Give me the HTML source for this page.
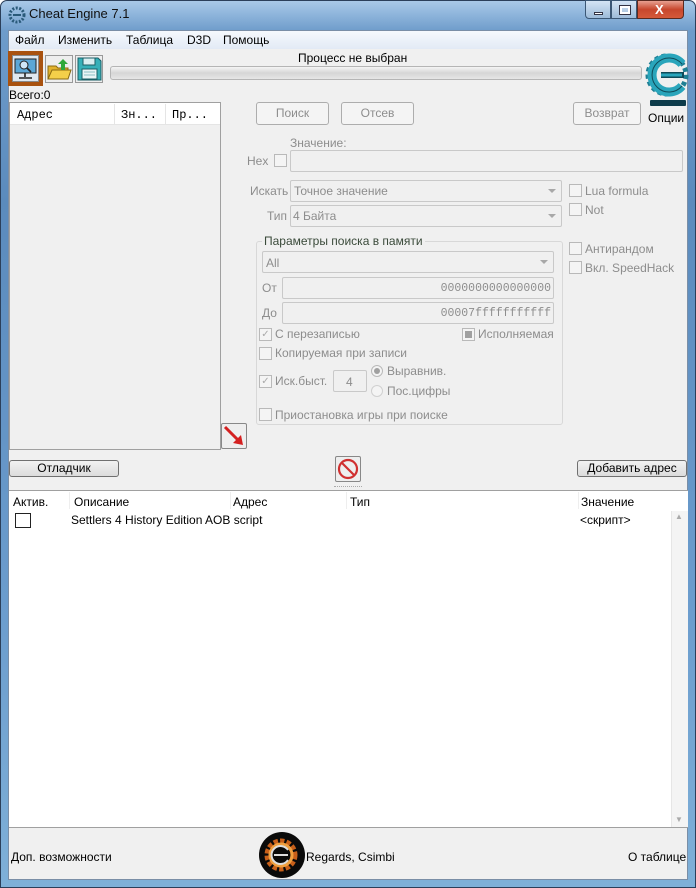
<!DOCTYPE html>
<html><head><meta charset="utf-8"><style>
*{box-sizing:border-box;margin:0;padding:0}
body{width:696px;height:888px;overflow:hidden;background:#fff;font-family:"Liberation Sans","DejaVu Sans",sans-serif;font-size:12px;color:#000;position:relative}
.a{position:absolute}
.frame{left:0;top:0;width:696px;height:888px;border-radius:7px 7px 0 0;background:linear-gradient(180deg,#a9c9e8 0,#6e9ccb 30px,#5b8bbd 200px,#6b9ccd 600px,#7fb0d8 888px);border:1px solid #2b3f5a}
.content{left:8px;top:30px;width:680px;height:850px;background:#f0f0f0;border:1px solid #7a8ea6}
.t{position:absolute;white-space:nowrap}
.g{color:#8d8d8d}
.btn{position:absolute;border:1px solid #adadad;border-radius:3px;background:#f4f4f4;color:#8d8d8d;text-align:center;line-height:20px}
.btn2{position:absolute;border:1px solid #707070;border-radius:3px;background:linear-gradient(#f2f2f2,#dcdcdc);text-align:center;line-height:15px}
.inp{position:absolute;border:1px solid #c9c9c9;border-radius:2px;background:#f0f0f0}
.cb{position:absolute;width:13px;height:13px;border:1px solid #b9b9b9;background:#f4f4f4}
.dd{position:absolute;right:5px;top:8px;width:0;height:0;border-left:4px solid transparent;border-right:4px solid transparent;border-top:4px solid #a8a8a8}
</style></head><body>
<div class="a frame"></div>
<svg class="a" style="left:8px;top:6px" width="18" height="18" viewBox="0 0 18 18"><circle cx="9" cy="9" r="7" fill="none" stroke="#2a5a7a" stroke-width="3" stroke-dasharray="2 1.5"/><path d="M5 9h8" stroke="#2a5a7a" stroke-width="2"/></svg>
<div class="t" style="left:29px;top:6px;font-size:13px;color:#111">Cheat Engine 7.1</div>
<div class="a" style="left:585px;top:0;width:26px;height:19px;border:1px solid #3b5775;border-radius:0 0 0 4px;background:linear-gradient(#d4e4f4,#9dbbd9)"><div class="a" style="left:8px;top:11px;width:9px;height:3px;background:#fff;border:1px solid #334"></div></div>
<div class="a" style="left:611px;top:0;width:26px;height:19px;border:1px solid #3b5775;background:linear-gradient(#d4e4f4,#9dbbd9)"><div class="a" style="left:8px;top:5px;width:10px;height:8px;border:2px solid #fff;outline:1px solid #334"></div></div>
<div class="a" style="left:637px;top:0;width:47px;height:19px;border:1px solid #5a2a20;border-radius:0 0 4px 0;background:linear-gradient(#e8a090,#c7472d 50%,#d55a3a)"><div class="t" style="left:17px;top:1px;color:#fff;font-weight:bold;font-size:13px">X</div></div>
<div class="a content"></div>
<div class="a" style="left:9px;top:31px;width:678px;height:18px;background:linear-gradient(#f6f9fd,#e2eaf5)"></div>
<div class="t" style="left:15px;top:33px;font-size:12px">Файл</div>
<div class="t" style="left:58px;top:33px">Изменить</div>
<div class="t" style="left:126px;top:33px">Таблица</div>
<div class="t" style="left:187px;top:33px">D3D</div>
<div class="t" style="left:223px;top:33px">Помощь</div>
<div class="a" style="left:8px;top:51px;width:35px;height:35px;background:#a9520f"></div>
<div class="a" style="left:12px;top:55px;width:27px;height:27px;background:#dfe8f0;border:1px solid #888"></div>
<svg class="a" style="left:13px;top:57px" width="25" height="24" viewBox="0 0 25 24"><rect x="2" y="2" width="21" height="14" fill="#5ba7d6" stroke="#222"/><circle cx="11" cy="8" r="4" fill="#cfe7f7" stroke="#222"/><path d="M14 11l4 4M12 16v4M6 21h13" stroke="#222" stroke-width="1.6"/></svg>
<div class="a" style="left:45px;top:55px;width:28px;height:28px;border:1px solid #999;background:#eee"></div>
<svg class="a" style="left:46px;top:56px" width="26" height="26" viewBox="0 0 26 26"><path d="M2 10h8l2 2h10v11H2z" fill="#e2b22c" stroke="#8a6a10"/><path d="M2 23l4-9h19l-3 9z" fill="#f4cf4a" stroke="#8a6a10"/><path d="M17 3l-5 5h3v6h4V8h3z" fill="#2fa83a"/></svg>
<div class="a" style="left:75px;top:55px;width:28px;height:28px;border:1px solid #999;background:#eee"></div>
<svg class="a" style="left:76px;top:56px" width="26" height="26" viewBox="0 0 26 26"><path d="M2 2h20l3 3v19H2z" fill="#36b0b8" stroke="#1b5f66"/><rect x="7" y="2" width="12" height="7" fill="#d9eef0" stroke="#1b5f66"/><rect x="6" y="13" width="15" height="10" fill="#e9f5f6" stroke="#1b5f66"/><path d="M8 16h11M8 19h11" stroke="#8abfc4"/></svg>
<div class="t" style="left:298px;top:51px">Процесс не выбран</div>
<div class="a" style="left:110px;top:66px;width:532px;height:14px;border:1px solid #b5b5b5;border-radius:3px;background:linear-gradient(#f5f5f5,#d6d6d6 50%,#e6e6e6)"></div>
<svg class="a" style="left:644px;top:50px" width="46" height="58" viewBox="0 0 46 58"><circle cx="23" cy="25" r="19" fill="none" stroke="#1f7f94" stroke-width="5" stroke-dasharray="4 3"/><path d="M38 14A17 17 0 1 0 38 36" fill="none" stroke="#2aa5bb" stroke-width="9"/><path d="M38 14A17 17 0 1 0 38 36" fill="none" stroke="#0f4a58" stroke-width="1" transform="translate(0 0)"/><path d="M17 25h23" stroke="#0f4a58" stroke-width="6"/><path d="M17 25h21" stroke="#2aa5bb" stroke-width="3"/><rect x="6" y="50" width="36" height="6" rx="1" fill="#0d3b4a"/></svg>
<div class="t" style="left:648px;top:111px">Опции</div>
<div class="t" style="left:9px;top:88px">Всего:0</div>
<div class="a" style="left:9px;top:102px;width:212px;height:348px;border:1px solid #a0a0a0;background:#f0f0f0"></div>
<div class="a" style="left:10px;top:103px;width:210px;height:22px;background:#fff;border-bottom:1px solid #e5e5e5"></div>
<div class="a" style="left:114px;top:104px;width:1px;height:20px;background:#e5e5e5"></div>
<div class="a" style="left:165px;top:104px;width:1px;height:20px;background:#e5e5e5"></div>
<div class="t" style="left:17px;top:108px;font-family:'Liberation Mono',monospace;font-size:12px">Адрес</div>
<div class="t" style="left:121px;top:108px;font-family:'Liberation Mono',monospace;font-size:12px">Зн...</div>
<div class="t" style="left:172px;top:108px;font-family:'Liberation Mono',monospace;font-size:12px">Пр...</div>
<div class="btn" style="left:256px;top:102px;width:73px;height:23px">Поиск</div>
<div class="btn" style="left:341px;top:102px;width:73px;height:23px">Отсев</div>
<div class="btn" style="left:573px;top:102px;width:68px;height:23px">Возврат</div>
<div class="t g" style="left:290px;top:136px">Значение:</div>
<div class="t g" style="left:247px;top:154px">Hex</div>
<div class="cb" style="left:274px;top:154px"></div>
<div class="inp" style="left:290px;top:150px;width:393px;height:22px"></div>
<div class="t g" style="left:250px;top:184px">Искать</div>
<div class="inp" style="left:290px;top:180px;width:272px;height:22px"><div class="t g" style="left:3px;top:3px">Точное значение</div><div class="dd"></div></div>
<div class="t g" style="left:267px;top:209px">Тип</div>
<div class="inp" style="left:290px;top:205px;width:272px;height:22px"><div class="t g" style="left:2px;top:3px">4 Байта</div><div class="dd"></div></div>
<div class="cb" style="left:569px;top:184px"></div><div class="t g" style="left:585px;top:184px">Lua formula</div>
<div class="cb" style="left:569px;top:203px"></div><div class="t g" style="left:585px;top:203px">Not</div>
<div class="cb" style="left:569px;top:242px"></div><div class="t g" style="left:585px;top:242px">Антирандом</div>
<div class="cb" style="left:569px;top:261px"></div><div class="t g" style="left:585px;top:261px">Вкл. SpeedHack</div>
<div class="a" style="left:256px;top:241px;width:307px;height:184px;border:1px solid #d8d8d8;border-radius:3px"></div>
<div class="t" style="left:262px;top:234px;background:#f0f0f0;padding:0 2px;color:#3a4a3a">Параметры поиска в памяти</div>
<div class="inp" style="left:262px;top:251px;width:292px;height:22px"><div class="t g" style="left:3px;top:4px">All</div><div class="dd"></div></div>
<div class="t g" style="left:262px;top:281px">От</div>
<div class="inp" style="left:282px;top:277px;width:272px;height:22px"><div class="t g" style="right:2px;top:4px;font-family:'Liberation Mono',monospace;font-size:11.5px">0000000000000000</div></div>
<div class="t g" style="left:262px;top:306px">До</div>
<div class="inp" style="left:282px;top:302px;width:272px;height:22px"><div class="t g" style="right:2px;top:4px;font-family:'Liberation Mono',monospace;font-size:11.5px">00007fffffffffff</div></div>
<div class="cb" style="left:259px;top:328px;color:#aaa;font-size:10px;line-height:11px;text-align:center">✓</div><div class="t g" style="left:275px;top:327px">С перезаписью</div>
<div class="cb" style="left:462px;top:328px"><div class="a" style="left:2px;top:2px;width:7px;height:7px;background:#a0a0a0"></div></div><div class="t g" style="left:478px;top:327px">Исполняемая</div>
<div class="cb" style="left:259px;top:347px"></div><div class="t g" style="left:275px;top:346px">Копируемая при записи</div>
<div class="cb" style="left:259px;top:375px;color:#aaa;font-size:10px;line-height:11px;text-align:center">✓</div><div class="t g" style="left:275px;top:374px">Иск.быст.</div>
<div class="inp" style="left:333px;top:370px;width:34px;height:22px"><div class="t g" style="left:12px;top:4px">4</div></div>
<div class="a" style="left:371px;top:365px;width:12px;height:12px;border:1px solid #b9b9b9;border-radius:50%;background:#f4f4f4"><div class="a" style="left:2px;top:2px;width:6px;height:6px;border-radius:50%;background:#a0a0a0"></div></div><div class="t g" style="left:387px;top:364px">Выравнив.</div>
<div class="a" style="left:371px;top:385px;width:12px;height:12px;border:1px solid #d0d0d0;border-radius:50%;background:#f4f4f4"></div><div class="t g" style="left:387px;top:384px">Пос.цифры</div>
<div class="cb" style="left:259px;top:408px"></div><div class="t g" style="left:275px;top:408px">Приостановка игры при поиске</div>
<div class="a" style="left:221px;top:423px;width:26px;height:26px;border:1px solid #888;border-radius:2px;background:#eee"></div>
<svg class="a" style="left:222px;top:424px" width="24" height="24" viewBox="0 0 24 24"><path d="M3 3l14 14" stroke="#d42020" stroke-width="3"/><path d="M21 21l-10-2 8-8z" fill="#d42020"/></svg>
<div class="btn2" style="left:9px;top:460px;width:110px;height:17px">Отладчик</div>
<div class="a" style="left:335px;top:456px;width:26px;height:26px;border:1px solid #888;border-radius:2px;background:#eee"></div>
<svg class="a" style="left:336px;top:457px" width="24" height="24" viewBox="0 0 24 24"><circle cx="12" cy="12" r="9" fill="none" stroke="#d03030" stroke-width="2.2"/><path d="M6 6l12 12" stroke="#d03030" stroke-width="2.2"/></svg>
<div class="btn2" style="left:577px;top:460px;width:110px;height:17px">Добавить адрес</div>
<div class="a" style="left:334px;top:486px;width:28px;height:1px;border-top:1px dotted #aaa"></div>
<div class="a" style="left:9px;top:490px;width:679px;height:338px;background:#fff;border-top:1px solid #a0a0a0;border-bottom:1px solid #a0a0a0"></div>
<div class="t" style="left:13px;top:495px">Актив.</div>
<div class="a" style="left:69px;top:492px;width:1px;height:17px;background:#eee"></div>
<div class="t" style="left:74px;top:495px">Описание</div>
<div class="a" style="left:230px;top:492px;width:1px;height:17px;background:#eee"></div>
<div class="t" style="left:233px;top:495px">Адрес</div>
<div class="a" style="left:346px;top:492px;width:1px;height:17px;background:#eee"></div>
<div class="t" style="left:350px;top:495px">Тип</div>
<div class="a" style="left:578px;top:492px;width:1px;height:17px;background:#eee"></div>
<div class="t" style="left:581px;top:495px">Значение</div>
<div class="a" style="left:15px;top:513px;width:16px;height:15px;border:1px solid #222;background:#fff"></div>
<div class="t" style="left:71px;top:513px">Settlers 4 History Edition AOB script</div>
<div class="t" style="left:580px;top:513px">&lt;скрипт&gt;</div>
<div class="a" style="left:671px;top:511px;width:17px;height:316px;background:#f4f4f4;border-left:1px solid #e6e6e6"></div>
<div class="t" style="left:675px;top:512px;font-size:8px;color:#aaa">▲</div>
<div class="t" style="left:675px;top:815px;font-size:8px;color:#aaa">▼</div>
<div class="t" style="left:11px;top:850px">Доп. возможности</div>
<svg class="a" style="left:258px;top:831px" width="48" height="48" viewBox="0 0 48 48"><ellipse cx="24" cy="24" rx="23" ry="23" fill="#0a0a0a"/><circle cx="23" cy="24" r="13" fill="none" stroke="#c8601a" stroke-width="7" stroke-dasharray="4 2"/><circle cx="23" cy="24" r="11" fill="none" stroke="#f0a040" stroke-width="3"/><path d="M30 19a9 9 0 1 0 0 10M16 24h14" fill="none" stroke="#ddd" stroke-width="2"/></svg>
<div class="t" style="left:306px;top:850px">Regards, Csimbi</div>
<div class="t" style="left:628px;top:850px">О таблице</div>
</body></html>
